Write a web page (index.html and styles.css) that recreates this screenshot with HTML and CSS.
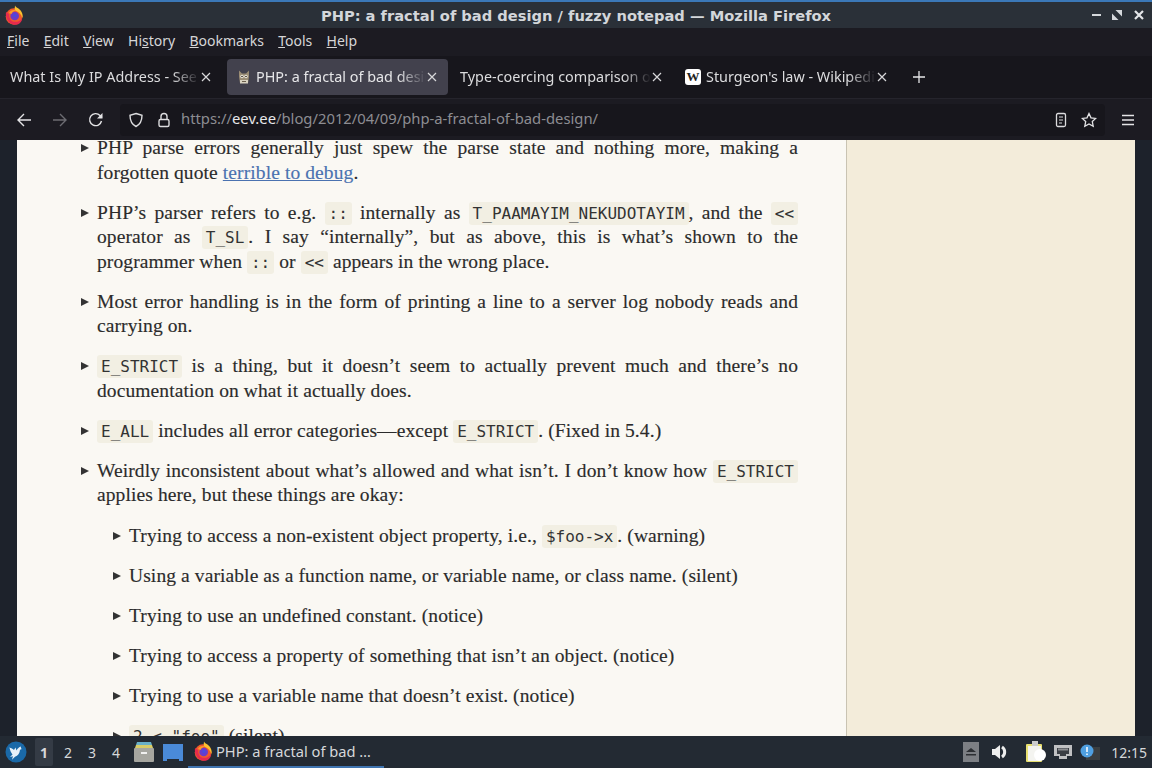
FILE: index.html
```html
<!DOCTYPE html>
<html lang="en">
<head>
<meta charset="utf-8">
<title>PHP: a fractal of bad design / fuzzy notepad — Mozilla Firefox</title>
<link rel="stylesheet" href="styles.css">
</head>
<body>
<div class="window">
  <header class="titlebar">
    <svg class="ff-logo" viewBox="0 0 20 20" width="20" height="20"><circle cx="10" cy="11.500" r="8.300" fill="#f0592b"/><path d="M11 0.500 C12 3 15 3 17 6 C19 9 19 12 18.300 13 C17 9 15 7 12 6 C10 5 11 2 11 0.500 Z" fill="#fcc02e"/><path d="M2 7 C1 13 5 19.500 11 19.800 C16 19.800 18 16 18.300 13 C16 16.500 12 17.500 9 16.500 C6 15.500 5 12 5 9 Z" fill="#e62a4d"/><circle cx="10.700" cy="11" r="4.300" fill="#6a3cc8"/><circle cx="11" cy="10.500" r="1.800" fill="#4a4ae0"/><path d="M5 8 C6 5.500 9 4.500 12 5.500 C10 6 8 7 7.500 9 Z" fill="#f99a2c"/></svg>
    <div class="title">PHP: a fractal of bad design / fuzzy notepad — Mozilla Firefox</div>
    <div class="winctl">
      <svg class="c-min" viewBox="0 0 9 12" width="9" height="12"><path d="M0 6h9" stroke="#d5d8dc" stroke-width="2"/></svg>
      <svg class="c-max" viewBox="0 0 12 12" width="12" height="12"><path d="M4.500 1h6.500v6.500zM1 4.500L7.500 11H1z" fill="#d5d8dc"/></svg>
      <svg class="c-close" viewBox="0 0 12 12" width="12" height="12"><path d="M2 2l8 8M10 2l-8 8" stroke="#e4e6e9" stroke-width="2.200"/></svg>
    </div>
  </header>
  <nav class="menubar">
    <span><u>F</u>ile</span><span><u>E</u>dit</span><span><u>V</u>iew</span><span>Hi<u>s</u>tory</span><span><u>B</u>ookmarks</span><span><u>T</u>ools</span><span><u>H</u>elp</span>
  </nav>
  <div class="tabbar">
    <div class="tab tab-first"><span class="tab-label">What Is My IP Address - See Your Public</span><svg class="tab-x" viewBox="0 0 10 10" width="10" height="10"><path d="M1 1l8 8M9 1l-8 8"/></svg></div>
    <div class="tab tab-active"><svg class="fav" viewBox="0 0 16 16" width="16" height="16"><path d="M3 1.500l3 3h4l3-3v6l-1 6.500H4L3 7.500z" fill="#9a8c74"/><circle cx="6" cy="7.500" r="1.700" fill="#f2eee2"/><circle cx="10" cy="7.500" r="1.700" fill="#f2eee2"/><circle cx="6" cy="7.500" r=".8" fill="#221c16"/><circle cx="10" cy="7.500" r=".8" fill="#221c16"/><path d="M4 11h8v3.500H4z" fill="#d8d2c0"/><path d="M6 12.500h4" stroke="#6a5e4c"/></svg><span class="tab-label">PHP: a fractal of bad design / fuzzy</span><svg class="tab-x" viewBox="0 0 10 10" width="10" height="10"><path d="M1 1l8 8M9 1l-8 8"/></svg></div>
    <div class="tab tab-third"><span class="tab-label">Type-coercing comparison or something</span><svg class="tab-x" viewBox="0 0 10 10" width="10" height="10"><path d="M1 1l8 8M9 1l-8 8"/></svg></div>
    <div class="tab tab-fourth"><span class="wiki">W</span><span class="tab-label">Sturgeon's law - Wikipedia and more</span><svg class="tab-x" viewBox="0 0 10 10" width="10" height="10"><path d="M1 1l8 8M9 1l-8 8"/></svg></div>
    <svg class="newtab" viewBox="0 0 12 12" width="12" height="12"><path d="M6 0v12M0 6h12" stroke="#e6e6e8" stroke-width="1.300"/></svg>
  </div>
  <div class="navbar">
    <svg class="nav-ic first" viewBox="0 0 16 16" width="16" height="16"><path d="M15 8H2M8 2L2 8l6 6" fill="none" stroke="#e4e4e6" stroke-width="1.400"/></svg>
    <svg class="nav-ic" viewBox="0 0 16 16" width="16" height="16"><path d="M1 8h13M8 2l6 6-6 6" fill="none" stroke="#6c6c72" stroke-width="1.400"/></svg>
    <svg class="nav-ic" viewBox="0 0 16 16" width="16" height="16"><path d="M13.500 9A6 6 0 1 1 12 3.500L14 5.500" fill="none" stroke="#e4e4e6" stroke-width="1.400"/><path d="M14.500 1v5.500H9z" fill="#e4e4e6"/></svg>
    <div class="urlbar">
      <svg viewBox="0 0 16 16" width="16" height="16"><path d="M8 1.500l6 1.800c0 5-1.500 9-6 11.200-4.500-2.200-6-6.200-6-11.200z" fill="none" stroke="#dcdcde" stroke-width="1.400"/></svg>
      <svg class="lock" viewBox="0 0 16 16" width="16" height="16"><path d="M5 7V4.500a3 3 0 0 1 6 0V7" fill="none" stroke="#dcdcde" stroke-width="1.400"/><rect x="3" y="7.500" width="10" height="7" rx="1.500" fill="none" stroke="#dcdcde" stroke-width="1.400"/></svg>
      <div class="url">https://<b>eev.ee</b>/blog/2012/04/09/php-a-fractal-of-bad-design/</div>
      <svg viewBox="0 0 16 16" width="16" height="16"><rect x="3.500" y="1.500" width="9" height="13" rx="1.500" fill="none" stroke="#dcdcde" stroke-width="1.300"/><path d="M6 5h4M6 8h4M6 11h3" stroke="#dcdcde" stroke-width="1.200"/></svg>
      <svg class="star" viewBox="0 0 16 16" width="16" height="16"><path d="M8 1.500l2 4.300 4.700.6-3.400 3.200.9 4.700L8 12l-4.200 2.300.9-4.700L1.300 6.400 6 5.800z" fill="none" stroke="#e4e4e6" stroke-width="1.300"/></svg>
    </div>
    <svg class="hamb" viewBox="0 0 14 12" width="14" height="12"><path d="M1 1.500h12M1 6h12M1 10.500h12" stroke="#e4e4e6" stroke-width="1.300"/></svg>
  </div>
  <main class="viewport">
    <article class="content">
      <ul class="list">
        <li><span class="ln j">PHP parse errors generally just spew the parse state and nothing more, making a</span><span class="ln">forgotten quote <a href="#">terrible to debug</a>.</span></li>
        <li><span class="ln j">PHP’s parser refers to e.g. <code>::</code> internally as <code>T_PAAMAYIM_NEKUDOTAYIM</code>, and the <code>&lt;&lt;</code></span><span class="ln j">operator as <code>T_SL</code>. I say “internally”, but as above, this is what’s shown to the</span><span class="ln">programmer when <code>::</code> or <code>&lt;&lt;</code> appears in the wrong place.</span></li>
        <li><span class="ln j">Most error handling is in the form of printing a line to a server log nobody reads and</span><span class="ln">carrying on.</span></li>
        <li><span class="ln j"><code>E_STRICT</code> is a thing, but it doesn’t seem to actually prevent much and there’s no</span><span class="ln">documentation on what it actually does.</span></li>
        <li><span class="ln"><code>E_ALL</code> includes all error categories—except <code>E_STRICT</code>. (Fixed in 5.4.)</span></li>
        <li><span class="ln j">Weirdly inconsistent about what’s allowed and what isn’t. I don’t know how <code>E_STRICT</code></span><span class="ln">applies here, but these things are okay:</span>
          <ul class="list sub">
            <li><span class="ln">Trying to access a non-existent object property, i.e., <code>$foo-&gt;x</code>. (warning)</span></li>
            <li><span class="ln">Using a variable as a function name, or variable name, or class name. (silent)</span></li>
            <li><span class="ln">Trying to use an undefined constant. (notice)</span></li>
            <li><span class="ln">Trying to access a property of something that isn’t an object. (notice)</span></li>
            <li><span class="ln">Trying to use a variable name that doesn’t exist. (notice)</span></li>
            <li><span class="ln"><code>2 &lt; "foo"</code> (silent)</span></li>
          </ul>
        </li>
      </ul>
    </article>
    <aside class="sidebar"></aside>
  </main>
  <footer class="taskbar">
    <svg class="start" viewBox="0 0 22 22" width="22" height="22"><circle cx="11" cy="11" r="10.500" fill="#1a69a8"/><path d="M3.500 6.500c2 .3 4 1 5.500 2.500l1.500-2.500 1 3c1-2 2.500-3.500 4.500-4-.3 1.500 0 2 .8 2.500l-1.800.8c-.3 3.500-2 6-5 7l-3 3 1-3.500-3 .8 2.500-2.500c-1.500-2-2.500-4-3-7z" fill="#e8f2fa"/></svg>
    <div class="ws"><span class="ws-on">1</span><span>2</span><span>3</span><span>4</span></div>
    <svg class="tb-ic" viewBox="0 0 22 22" width="22" height="22"><path d="M4 1h14l1 3H3z" fill="#69b0c8"/><path d="M3 4h16l1 3H2z" fill="#d8cc68"/><rect x="1" y="7" width="20" height="14" rx="1" fill="#a6a6a0"/><rect x="8" y="11" width="6" height="2" fill="#f0f0f0"/></svg>
    <svg class="tb-ic2" viewBox="0 0 22 22" width="22" height="22"><path d="M1 3h20v17h-4v-2H5v2H1z" fill="#4a8ad8"/></svg>
    <div class="task"><svg viewBox="0 0 20 20" width="20" height="20"><circle cx="10" cy="11.500" r="8.300" fill="#f0592b"/><path d="M11 0.500 C12 3 15 3 17 6 C19 9 19 12 18.300 13 C17 9 15 7 12 6 C10 5 11 2 11 0.500 Z" fill="#fcc02e"/><path d="M2 7 C1 13 5 19.500 11 19.800 C16 19.800 18 16 18.300 13 C16 16.500 12 17.500 9 16.500 C6 15.500 5 12 5 9 Z" fill="#e62a4d"/><circle cx="10.700" cy="11" r="4.300" fill="#6a3cc8"/><circle cx="11" cy="10.500" r="1.800" fill="#4a4ae0"/><path d="M5 8 C6 5.500 9 4.500 12 5.500 C10 6 8 7 7.500 9 Z" fill="#f99a2c"/></svg><span>PHP: a fractal of bad …</span></div>
    <div class="tray">
      <svg viewBox="0 0 16 20" width="16" height="20"><rect width="16" height="20" fill="#7c7f84"/><path d="M3 10l5-4 5 4zM3 12h10v1.500H3z" fill="#2c2f33"/></svg>
      <svg class="vol" viewBox="0 0 18 16" width="18" height="16"><path d="M1 5h3l5-4v14l-5-4H1z" fill="#eee"/><path d="M11 3a6 6 0 0 1 0 10" fill="none" stroke="#eee" stroke-width="3"/></svg>
      <svg class="clip" viewBox="0 0 20 22" width="20" height="22"><rect x="0" y="3" width="16" height="18" rx="1" fill="#e8e070"/><rect x="2" y="5" width="13" height="15" fill="#f4f4f0"/><rect x="6" y="0" width="6" height="5" fill="#ccc"/><circle cx="14" cy="14" r="6" fill="#fff"/></svg>
      <svg class="net" viewBox="0 0 20 16" width="20" height="16"><path d="M1 1h18v11h-5v3H6v-3H1z" fill="#bfc0c2"/><path d="M4 4h12v6h-3v2H7v-2H4z" fill="#3a3e44"/><path d="M6 4.500v2M8 4.500v2M10 4.500v2M12 4.500v2M14 4.500v2" stroke="#ddd"/></svg>
      <svg class="note" viewBox="0 0 20 16" width="20" height="16"><rect x="6" y="3" width="14" height="13" fill="#3a3e40"/><circle cx="7" cy="7" r="6.500" fill="#4f9fe0"/><path d="M7 3v5M7 9.500v1.500" stroke="#fff" stroke-width="1.500"/></svg>
      <span class="clock">12:15</span>
    </div>
  </footer>
</div>
</body>
</html>
```
FILE: styles.css
```css
* { box-sizing: border-box; }
html, body { margin: 0; height: 100%; overflow: hidden; }
body { background: #1c1b22; font-family: "Noto Sans", sans-serif; }
.window { width: 1152px; height: 768px; display: flex; flex-direction: column; overflow: hidden; }

.titlebar { height: 28px; flex: none; display: flex; align-items: center; border-top: 2px solid #3b78b8; background: #2a3038; padding: 0 0 0 4px; }
.ff-logo { flex: none; }
.title { flex: 1; text-align: center; font: bold 14.670px "DejaVu Sans", sans-serif; padding-left: 36px; color: #d3d6da; }
.winctl { display: flex; align-items: center; width: 60px; }
.c-min { flex: none; }
.c-max { flex: none; margin-left: 10px; }
.c-close { flex: none; margin-left: 10px; }

.menubar { height: 28px; flex: none; display: flex; align-items: center; gap: 14.300px; padding: 0 7px 3px; background: #1c1b22; color: #d6d6d8; font-size: 14px; }

.tabbar { height: 42px; flex: none; display: flex; align-items: center; background: #17161c; color: #dcdcde; font-size: 14.400px; }
.tab { display: flex; align-items: center; height: 36px; line-height: 34px; position: relative; }
.tab-first { width: 222px; padding-left: 10px; margin-right: 5px; }
.tab-active { width: 221px; padding-left: 10px; background: #42414d; border-radius: 4px; color: #e6e6e8; }
.tab-third { width: 223px; padding-left: 12px; }
.tab-third .tab-x { margin-right: 9px; }
.tab-fourth { width: 226px; padding-left: 14px; }
.tab-fourth .tab-x { margin-right: 10px; }
.tab-label { flex: 1; min-width: 0; white-space: nowrap; overflow: hidden; -webkit-mask-image: linear-gradient(to left, transparent 0, #000 28px); mask-image: linear-gradient(to left, transparent 0, #000 28px); }
.tab-x { flex: none; margin: 0 11px 0 1px; stroke: #d8d8da; stroke-width: 1.200; fill: none; }
.fav { flex: none; margin-right: 4px; margin-left: -1px; }
.wiki { flex: none; width: 16px; height: 16px; background: #fff; border-radius: 3px; color: #222; font: bold 13px "Liberation Serif", serif; text-align: center; line-height: 16px; margin-right: 5px; }
.newtab { flex: none; margin-left: 16px; }

.navbar { height: 42px; flex: none; display: flex; align-items: center; border-top: 1px solid #25242c; background: #1c1b22; padding: 0 17px 0 16px; }
.nav-ic { flex: none; margin-right: 20px; }
.urlbar { flex: 1; height: 32px; display: flex; align-items: center; background: #17161c; border-radius: 4px; margin-left: -4px; padding: 0 8px; color: #8d8d92; font-size: 14.800px; }
.lock { margin-left: 12px; }
.url { flex: 1; margin-left: 9px; margin-top: -3px; white-space: nowrap; }
.url b { font-weight: 400; color: #e8e8ea; }
.star { margin-left: 12px; }
.hamb { flex: none; margin-left: 16px; }

.viewport { height: 596px; flex: none; display: flex; padding: 0 17px; background: #1d222b; overflow: hidden; }
.content { width: 830px; flex: none; background: #faf8f3; padding: 0 48px 0 64px; color: #2b2b2b; overflow: hidden; border-right: 1px solid #c9c3b2; }
.sidebar { flex: 1; background: #f3ecda; }

.list { list-style: none; margin: -3.600px 0 0; padding: 0 0 0 16px; font: 19.500px/24.500px "Liberation Serif", serif; letter-spacing: .1px; -webkit-text-stroke: .15px; }
.list li { margin-bottom: 15.500px; position: relative; }
.list li::before { content: ""; position: absolute; left: -16px; top: 8px; border-left: 8px solid #333; border-top: 4px solid transparent; border-bottom: 4px solid transparent; }
.sub { margin: 16px 0 0; padding-left: 32px; }
.ln { display: block; white-space: nowrap; }
.ln.j { white-space: normal; text-align: justify; text-align-last: justify; }
a { color: #4a72b0; }
code { font: 16px "DejaVu Sans Mono", monospace; letter-spacing: 0; -webkit-text-stroke: 0; background: #f2efe3; padding: 2px 4px; border-radius: 3px; color: #333; }

.taskbar { height: 32px; flex: none; display: flex; align-items: center; background: #232a33; padding-left: 5px; color: #d6d8da; font-size: 14px; }
.start { flex: none; }
.ws { display: flex; margin-left: 5px; }
.ws span { width: 24px; height: 28px; display: flex; align-items: center; justify-content: center; font-size: 14px; }
.ws .ws-on { background: #343b45; font-weight: 700; border-radius: 2px; margin: 0 3px; width: 18px; }
.tb-ic { margin-left: 5px; flex: none; }
.tb-ic2 { margin-left: 7px; flex: none; }
.task { margin-left: 4px; width: 196px; height: 32px; display: flex; align-items: center; gap: 3px; padding-left: 5px; border-bottom: 2px solid #3f74b0; font-size: 14.670px; }
.tray { margin-left: auto; display: flex; align-items: center; padding-right: 5px; }
.vol { margin-left: 12px; }
.clip { margin-left: 17px; }
.net { margin-left: 7px; }
.note { margin-left: 7px; }
.clock { margin-left: 11px; font-size: 14px; }
```
